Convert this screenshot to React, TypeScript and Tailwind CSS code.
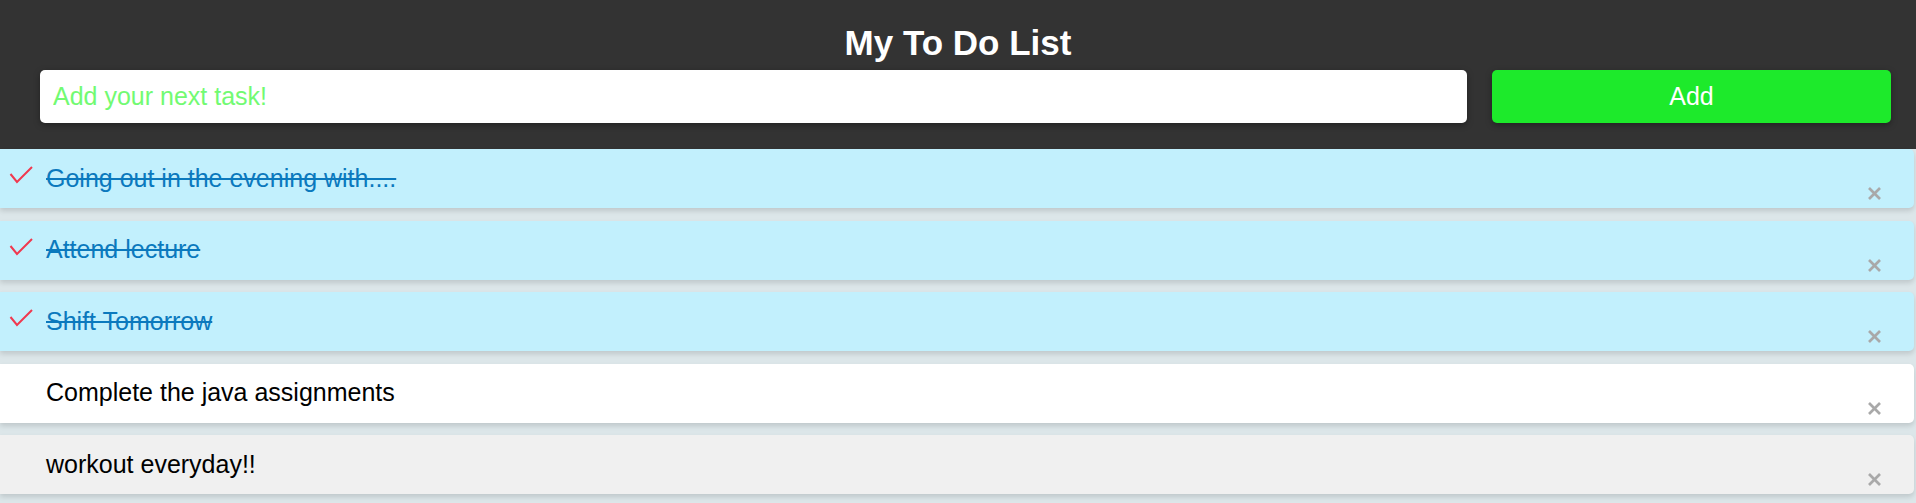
import React from "react";

type Item = { text: string; done: boolean; bg: string };

const items: Item[] = [
  { text: "Going out in the evening with....", done: true, bg: "bg-[#c2f0fd]" },
  { text: "Attend lecture", done: true, bg: "bg-[#c2f0fd]" },
  { text: "Shift Tomorrow", done: true, bg: "bg-[#c2f0fd]" },
  { text: "Complete the java assignments", done: false, bg: "bg-white" },
  { text: "workout everyday!!", done: false, bg: "bg-[#f0f0f0]" },
];

function Check() {
  return (
    <svg
      className="absolute left-[9px] top-[17px]"
      width="25"
      height="18"
      viewBox="0 0 25 18"
    >
      <polyline
        points="1.5,8 8,16 23,1"
        fill="none"
        stroke="#f0394f"
        strokeWidth="2"
        strokeLinecap="butt"
        strokeLinejoin="miter"
      />
    </svg>
  );
}

function Close() {
  return (
    <svg
      className="absolute right-[33px] top-[38px]"
      width="13"
      height="13"
      viewBox="0 0 13 13"
    >
      <line x1="1" y1="1" x2="12" y2="12" stroke="#a9a9a9" strokeWidth="2.6" />
      <line x1="12" y1="1" x2="1" y2="12" stroke="#a9a9a9" strokeWidth="2.6" />
    </svg>
  );
}

export default function App() {
  return (
    <div
      className="min-h-[503px] bg-[#dce6e9]"
      style={{ fontFamily: '"Liberation Sans", Arial, sans-serif' }}
    >
      <header className="bg-[#333333] pt-[22px] pb-[26px]">
        <h2 className="h-[41px] text-center text-[35px] font-bold leading-[41px] text-white">
          My To Do List
        </h2>
        <div className="mt-[7px] flex gap-[25px] pl-[40px] pr-[25px]">
          <input
            type="text"
            placeholder="Add your next task!"
            className="h-[53px] flex-1 rounded-[5px] bg-white px-[13px] text-[25px] text-black shadow-[0_2px_6px_rgba(0,0,0,0.35)] outline-none placeholder:text-[#72fa72]"
          />
          <button className="h-[53px] w-[399px] rounded-[5px] bg-[#1dea2b] text-[25px] text-white shadow-[0_2px_6px_rgba(0,0,0,0.35)]">
            Add
          </button>
        </div>
      </header>
      <ul className="flex flex-col gap-[12.5px] pr-[2px]">
        {items.map((it, i) => (
          <li
            key={i}
            className={`relative flex h-[59px] items-center rounded-r-[5px] pl-[46px] text-[25px] shadow-[0_3px_5px_rgba(0,0,0,0.13)] ${it.bg} ${
              it.done ? "text-[#0b79bd] line-through" : "text-black"
            }`}
          >
            {it.done && <Check />}
            <span>{it.text}</span>
            <Close />
          </li>
        ))}
      </ul>
    </div>
  );
}
